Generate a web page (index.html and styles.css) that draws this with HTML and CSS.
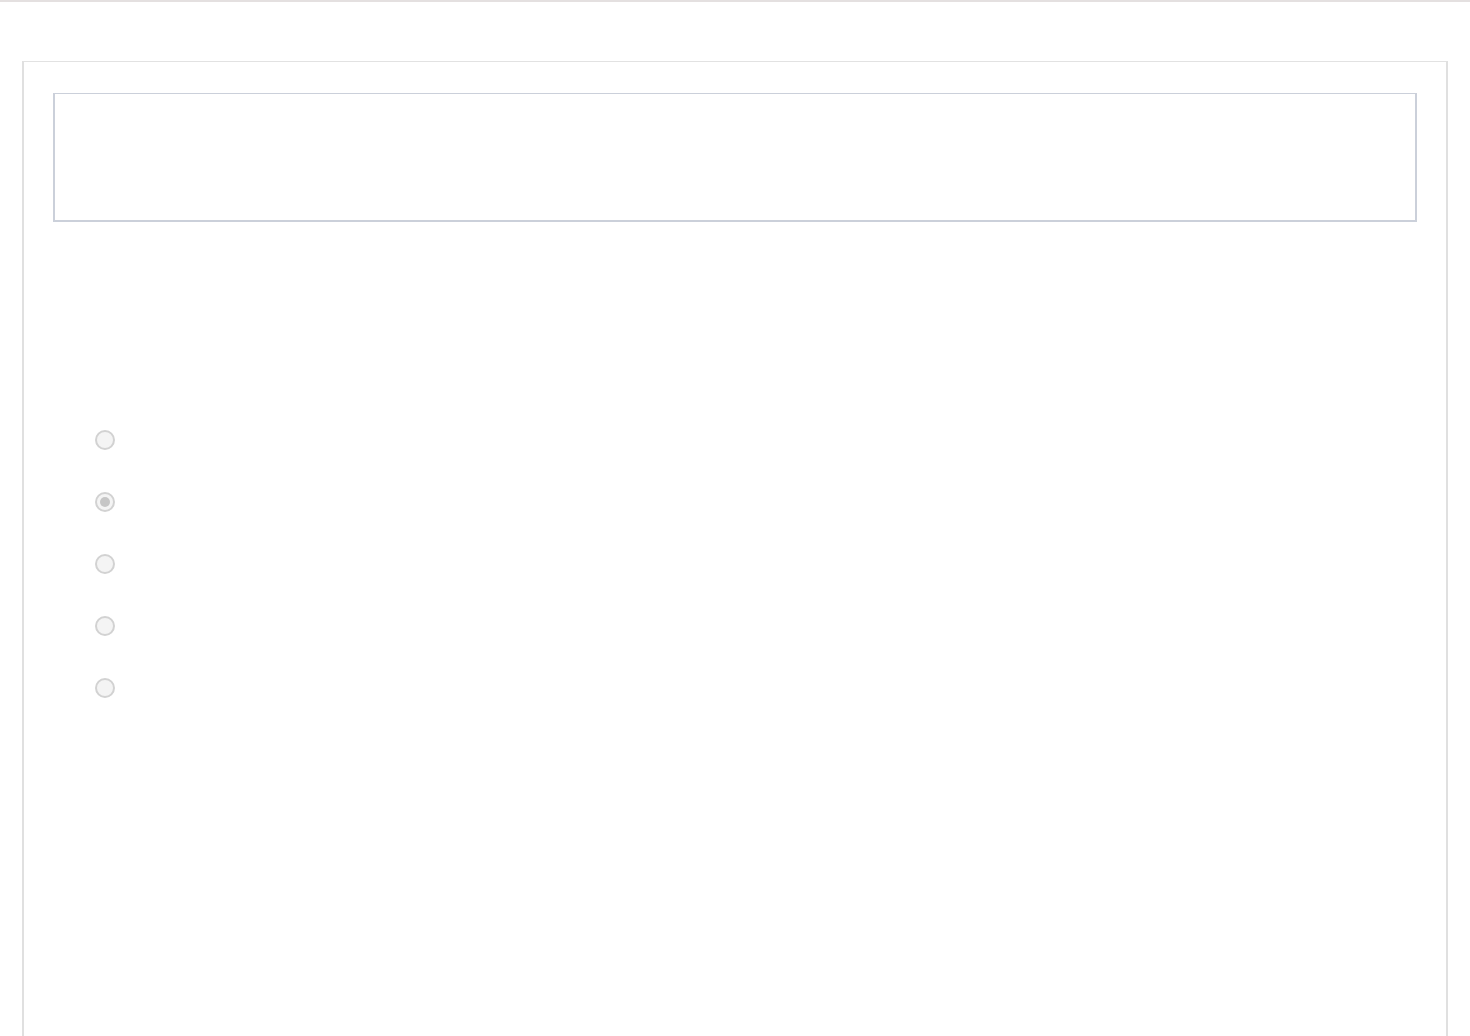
FILE: index.html
```html
<!DOCTYPE html>
<html lang="en">
<head>
<meta charset="UTF-8">
<title>Question</title>
<link rel="stylesheet" href="styles.css">
</head>
<body>

<div id="topbar"></div>
<div id="panel">
  <div id="question-box"></div>

  <ul id="answers">
    <li><input type="radio" name="answer" disabled></li>
    <li><input type="radio" name="answer" disabled checked></li>
    <li><input type="radio" name="answer" disabled></li>
    <li><input type="radio" name="answer" disabled></li>
    <li><input type="radio" name="answer" disabled></li>
  </ul>
</div>

</body>
</html>
```

FILE: styles.css
```css
html, body {
  margin: 0;
  height: 100%;
  overflow: hidden;
  background: #fff;
  font-family: "Liberation Sans", Arial, sans-serif;
}

#topbar {
  height: 2px;
  background: #e4e0e0;
}

#panel {
  margin: 59px 22px 0 22px;
  border-top: 1px solid #e2e2e2;
  border-left: 2px solid #e0e0e0;
  border-right: 2px solid #e0e0e0;
  padding: 31px 29px 0 29px;
  min-height: 1200px;
}

#question-box {
  height: 126px;
  border: 2px solid #cbd0da;
  border-top-width: 1px;
}

#answers {
  list-style: none;
  margin: 187px 0 0 0;
  padding: 0 0 0 42px;
}

#answers li {
  height: 62px;
  display: flex;
  align-items: center;
}

#answers input {
  appearance: none;
  width: 20px;
  height: 20px;
  margin: 0;
  border: 2px solid #d2d2d2;
  border-radius: 50%;
  background: #f4f4f4;
  display: flex;
  align-items: center;
  justify-content: center;
}

#answers input:checked::after {
  content: "";
  width: 10px;
  height: 10px;
  border-radius: 50%;
  background: #c6c6c6;
}
```
